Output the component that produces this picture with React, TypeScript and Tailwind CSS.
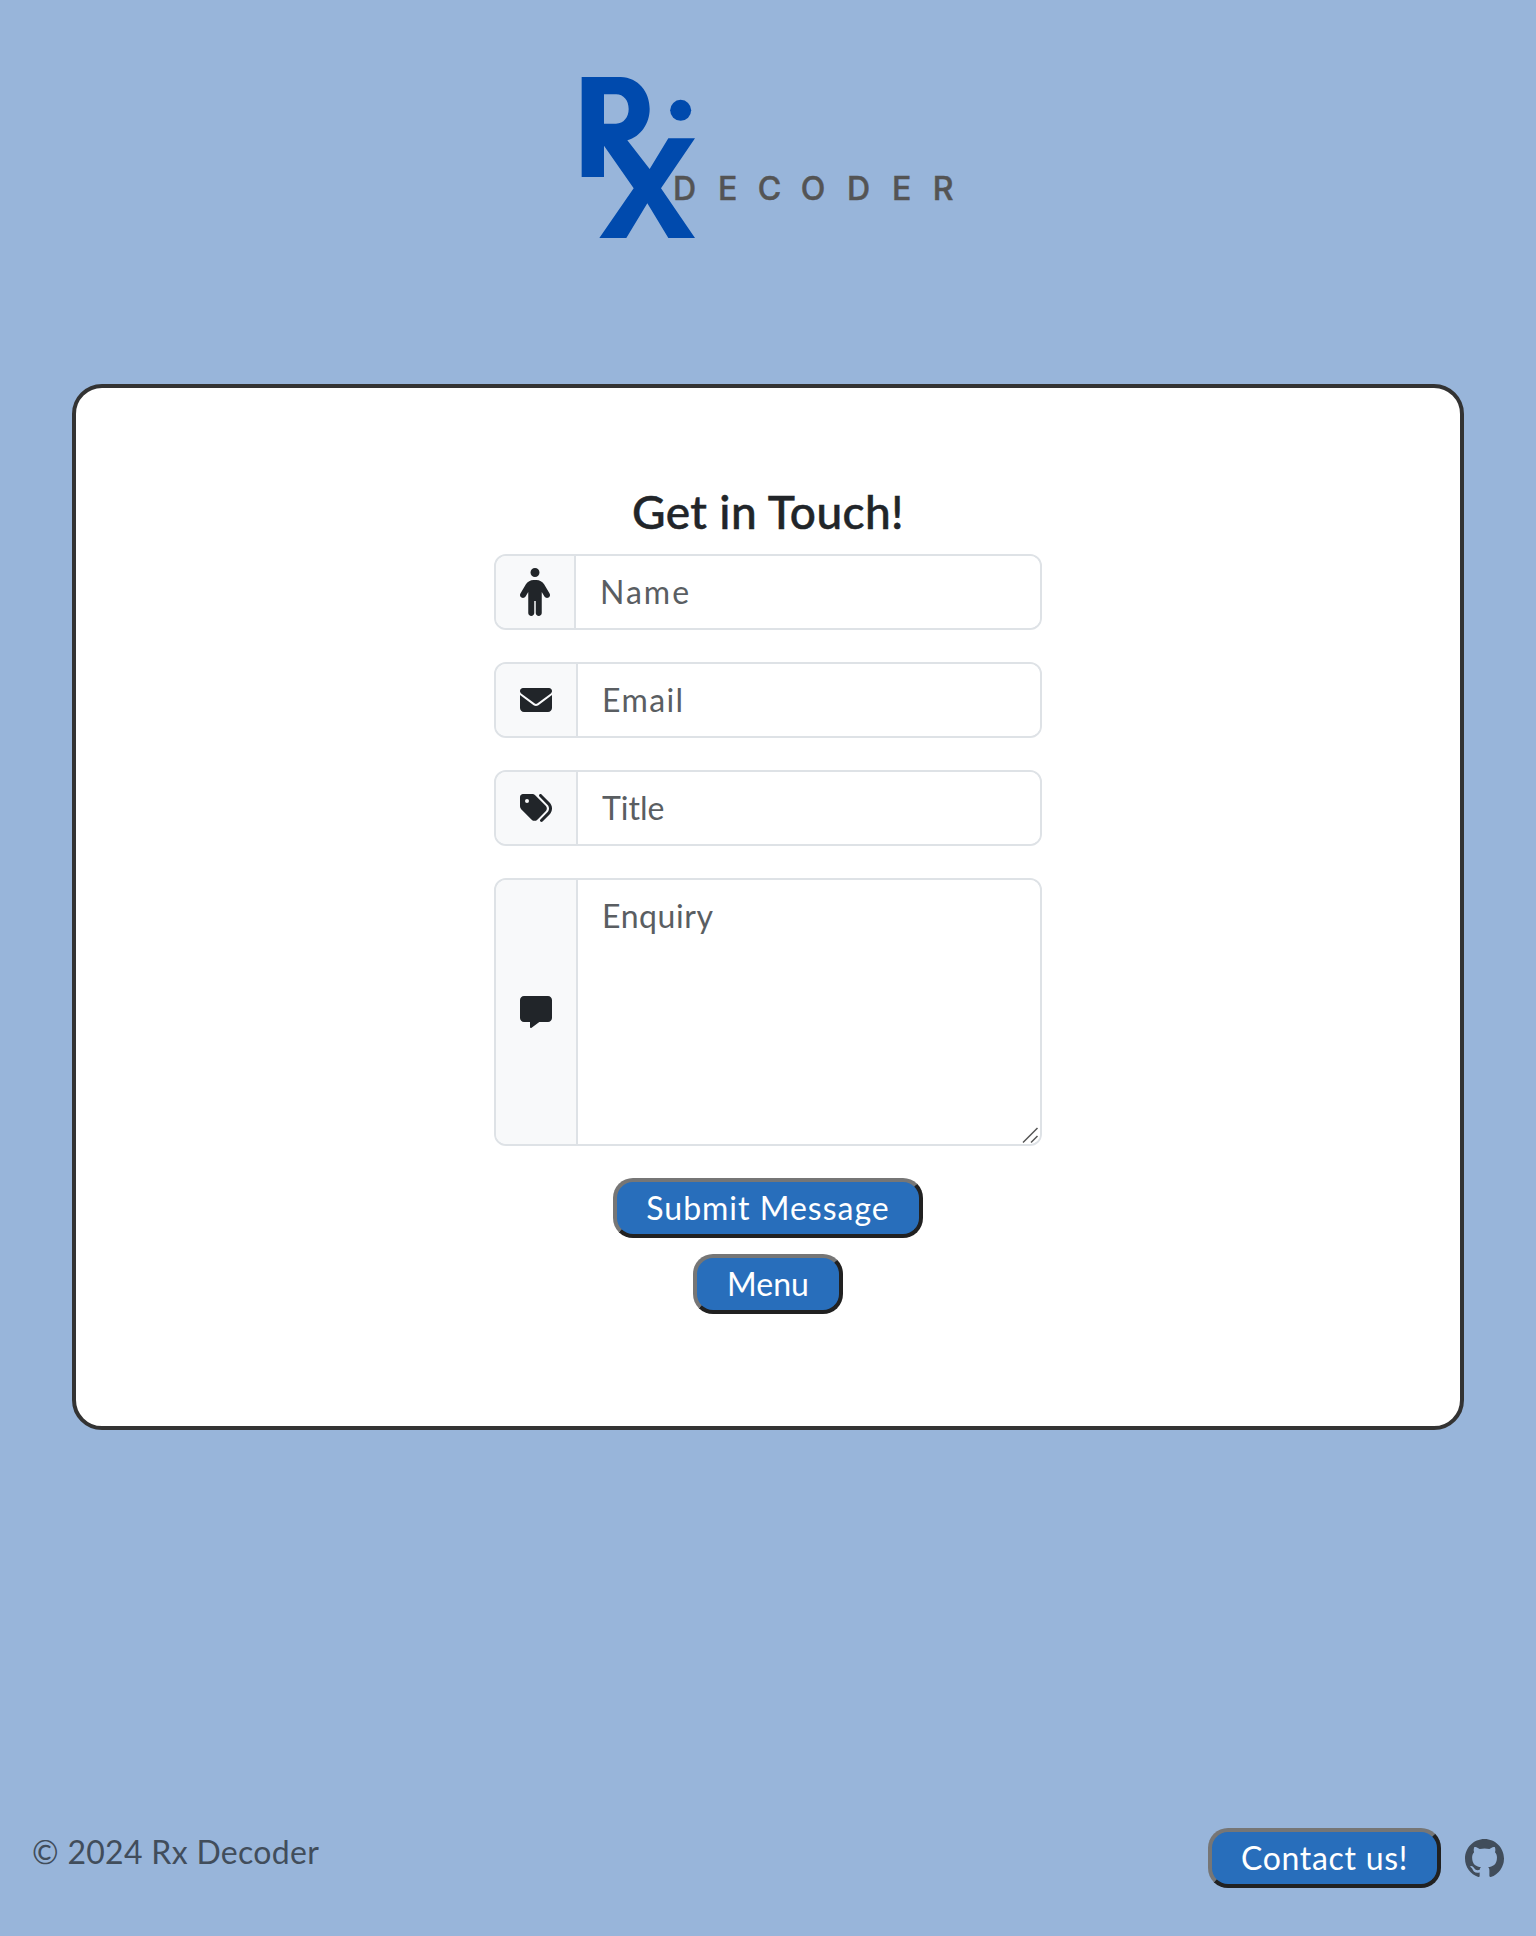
import React from "react";
import { FaPerson, FaEnvelope, FaTags, FaMessage } from "react-icons/fa6";
import { BsGithub } from "react-icons/bs";

function Logo() {
  return (
    <svg width="420" height="200" viewBox="0 0 1260 600" className="block" aria-label="Rx Decoder">
      <g fill="#004aad">
        <path
          fillRule="evenodd"
          d="M65 51H182C235 53 269 95 269 147C269 190 242 230 202 241L269 327L325 235H405L303 385L405 534H325L262 430L199 534H118L221 385L132 257V351H65ZM132 103V191H168C191 191 206 171 206 147C206 122 191 103 168 103Z"
        />
        <circle cx="362" cy="151" r="31.5" />
      </g>
      <text
        x="339 474 593 722 861 996 1118"
        y="419"
        fontSize="96"
        fontWeight="500"
        fill="#545454"
        stroke="#545454"
        strokeWidth="1.5"
        className="font-['Inter',sans-serif]"
      >
        DECODER
      </text>
    </svg>
  );
}

const field =
  "min-w-0 flex-1 bg-white pl-6 pr-6 outline-none text-[#212529] placeholder:text-[#5a5e62] placeholder:opacity-100";

function Group({ icon, children, tall = false }: { icon: React.ReactNode; children: React.ReactNode; tall?: boolean }) {
  return (
    <div
      className={
        "relative flex w-full overflow-hidden rounded-[12px] border-2 border-[#dee2e6] " +
        (tall ? "h-[268px]" : "h-[76px]")
      }
    >
      <span className="flex shrink-0 items-center border-r-2 border-[#dee2e6] bg-[#f8f9fa] px-6 text-[#212529]">
        {icon}
      </span>
      {children}
    </div>
  );
}

function Button({ children, className }: { children: React.ReactNode; className: string }) {
  return (
    <button
      className={
        "flex h-[60px] items-center justify-center whitespace-nowrap rounded-[20px] border-4 border-t-[#767676] border-l-[#767676] border-r-[#212121] border-b-[#212121] bg-[#286ebb] text-white " +
        className
      }
    >
      {children}
    </button>
  );
}

export default function App() {
  return (
    <div className="flex h-[1936px] w-full flex-col bg-[#98b5da] font-['Lato',sans-serif] text-[32px] leading-[48px]">
      <header className="flex h-[384px] justify-center pt-[60px] pl-1">
        <Logo />
      </header>

      <main className="mx-[72px] flex h-[1046px] shrink-0 flex-col items-center rounded-[30px] border-4 border-[#333] bg-white pt-[95px]">
        <h1 className="h-[71px] text-[46px] font-medium leading-[58px] tracking-[0.4px] text-[#212529] [-webkit-text-stroke:0.5px_#212529]">
          Get in Touch!
        </h1>
        <form className="flex w-[548px] flex-col items-center">
          <div className="flex w-full flex-col gap-8">
            <Group icon={<FaPerson className="h-12 w-[30px]" />}>
              <input className={field + " tracking-[2px]"} placeholder="Name" />
            </Group>
            <Group icon={<FaEnvelope className="size-8" />}>
              <input className={field + " tracking-[1.4px]"} placeholder="Email" />
            </Group>
            <Group icon={<FaTags className="size-8" />}>
              <input className={field} placeholder="Title" />
            </Group>
            <Group tall icon={<FaMessage className="size-8" />}>
              <textarea className={field + " resize-none pt-3 tracking-[0.6px]"} placeholder="Enquiry" />
              <svg className="absolute right-0 bottom-0" width="18" height="18" viewBox="0 0 18 18" stroke="#555" strokeWidth="1.5">
                <path d="M1 16.5L15.5 2M9 16.5L15.5 10" />
              </svg>
            </Group>
          </div>
          <Button className="mt-8 w-[310px] tracking-[1px]">Submit Message</Button>
          <Button className="mt-4 w-[150px]">Menu</Button>
        </form>
      </main>

      <footer className="mt-[398px] flex items-start justify-between pr-8 pl-8">
        <p className="tracking-[0.3px] text-[#414d5b]">© 2024 Rx Decoder</p>
        <div className="flex items-center gap-6">
          <Button className="w-[233px] tracking-[0.7px]">Contact us!</Button>
          <BsGithub className="size-[39px] text-[#414d5b]" />
        </div>
      </footer>
    </div>
  );
}
